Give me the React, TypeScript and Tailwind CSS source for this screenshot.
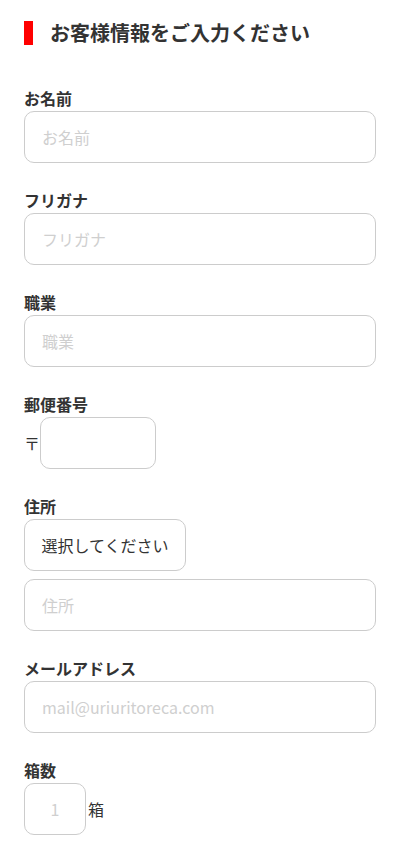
import { useState } from "react";

const font = {
  fontFamily: '"Noto Sans CJK JP", "Noto Sans", sans-serif',
};

const inputCls =
  "h-[52px] rounded-[10px] border border-[#cccccc] bg-white px-[17px] text-[16px] text-[#333] placeholder:text-[#cfcfcf] outline-none";

// ラベル + 入力欄 1セット
function Field({ label, children }: { label: string; children: React.ReactNode }) {
  return (
    <div className="flex flex-col">
      <label className="mb-[2px] text-[16px] font-bold leading-[22px] text-[#333]">
        {label}
      </label>
      {children}
    </div>
  );
}

export default function App() {
  const [count, setCount] = useState("");

  return (
    <main style={font} className="min-h-[850px] bg-white px-6 pt-[21px] text-[#333]">
      {/* 見出し */}
      <div className="flex items-center gap-[17px]">
        <span className="h-6 w-[9px] bg-[#ff0000]" />
        <h1 className="text-[20px] font-bold leading-6 text-[#333]">
          お客様情報をご入力ください
        </h1>
      </div>

      <form className="mt-[42px] flex flex-col gap-[26px]">
        <Field label="お名前">
          <input className={inputCls} placeholder="お名前" />
        </Field>

        <Field label="フリガナ">
          <input className={inputCls} placeholder="フリガナ" />
        </Field>

        <Field label="職業">
          <input className={inputCls} placeholder="職業" />
        </Field>

        <Field label="郵便番号">
          <div className="flex items-center">
            <span className="w-4 text-[16px] leading-none">〒</span>
            <input className={`${inputCls} w-[116px]`} />
          </div>
        </Field>

        <div className="flex flex-col">
          <label className="mb-[2px] text-[16px] font-bold leading-[22px] text-[#333]">
            住所
          </label>
          <button
            type="button"
            className="h-[52px] w-[162px] rounded-[10px] border border-[#cccccc] bg-white text-[16px] text-[#333]"
          >
            選択してください
          </button>
          <input className={`${inputCls} mt-[8px]`} placeholder="住所" />
        </div>

        <Field label="メールアドレス">
          <input className={inputCls} placeholder="mail@uriuritoreca.com" />
        </Field>

        <Field label="箱数">
          <div className="flex items-center gap-[2px]">
            <input
              className={`${inputCls} w-[62px] px-0 text-center`}
              placeholder="1"
              value={count}
              onChange={(e) => setCount(e.target.value)}
            />
            <span className="text-[16px] text-[#333]">箱</span>
          </div>
        </Field>
      </form>
    </main>
  );
}
